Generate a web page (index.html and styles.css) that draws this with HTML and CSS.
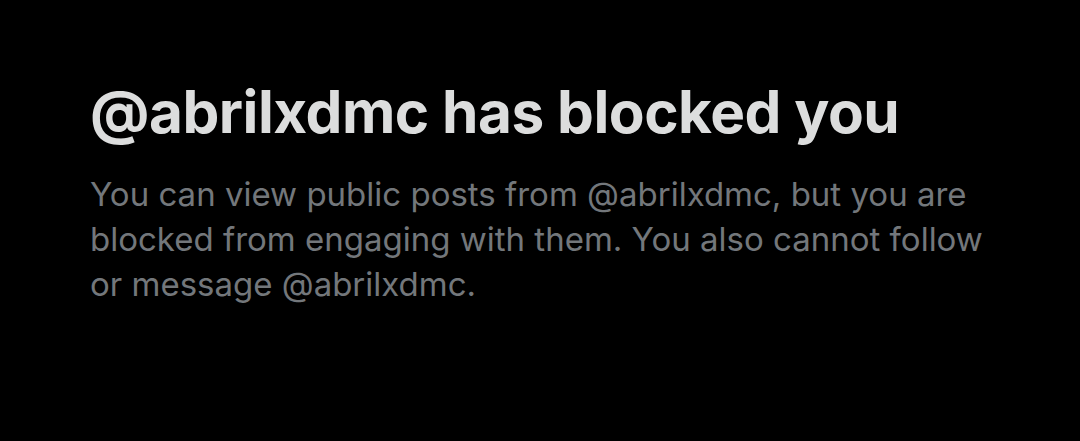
FILE: index.html
```html
<!DOCTYPE html>
<html lang="en">
<head>
<meta charset="utf-8">
<link rel="stylesheet" href="styles.css">
</head>
<body>
<main class="blocked">
  <h1 class="blocked-title">@abrilxdmc has blocked you</h1>
  <p class="blocked-text">You can view public posts from @abrilxdmc, but you are blocked from engaging with them. You also cannot follow or message @abrilxdmc.</p>
</main>
</body>
</html>
```
FILE: styles.css
```css
html, body {
  margin: 0;
  padding: 0;
  background: #000;
  height: 100%;
}
.blocked {
  padding: 77px 90px 0 90px;
  font-family: Inter, "Noto Sans", sans-serif;
  max-width: 900px;
}
.blocked-title {
  margin: 0;
  font-size: 58.5px;
  line-height: 70px;
  font-weight: 700;
  color: #dcdddd;
  letter-spacing: -0.5px;
}
.blocked-text {
  margin: 25px 0 0 0;
  font-size: 33px;
  line-height: 45px;
  font-weight: 400;
  color: #73777b;
}
```
